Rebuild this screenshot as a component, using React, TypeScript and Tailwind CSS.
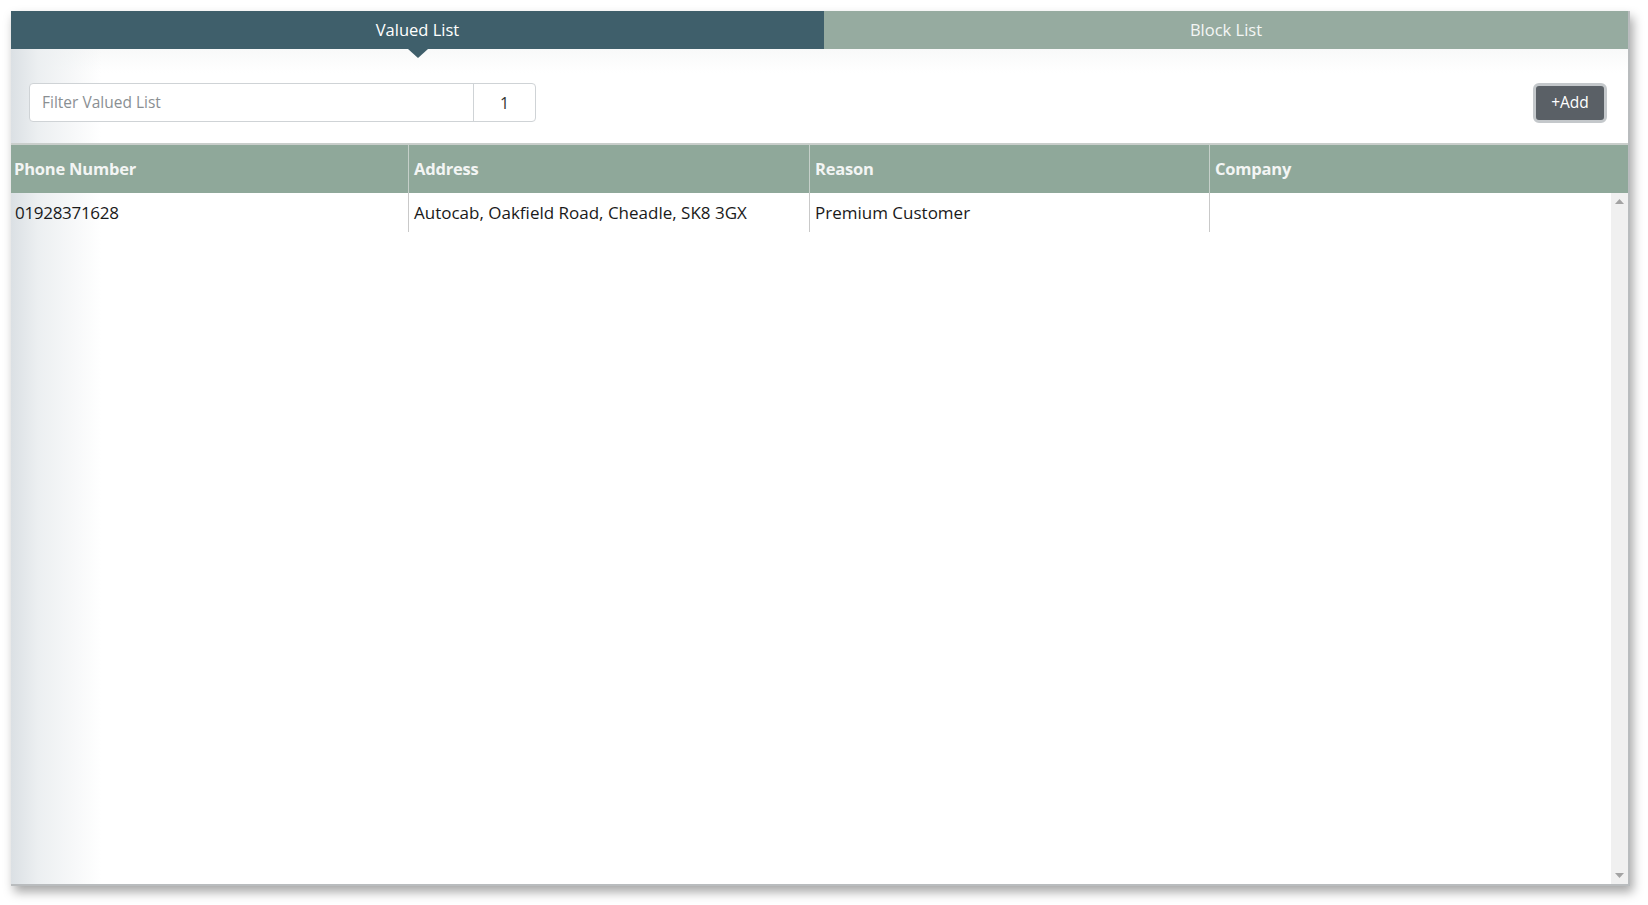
import React from 'react';

const rows = [
  { phone: '01928371628', address: 'Autocab, Oakfield Road, Cheadle, SK8 3GX', reason: 'Premium Customer', company: '' },
];

const App: React.FC = () => {
  return (
    <div className="w-[1648px] h-[905px] bg-white pt-[11px] pl-[11px] font-['Open_Sans',sans-serif]">
      {/* Panel */}
      <div className="relative w-[1619px] h-[875px] flex flex-col bg-white border-r-2 border-b-2 border-[#b9bcbe] shadow-[3px_6px_10px_rgba(0,0,0,0.35)] overflow-hidden">
        {/* left fade */}
        <div className="absolute left-0 top-[38px] bottom-0 w-[90px] bg-[linear-gradient(to_right,#dbe0e4,#eceff1_30%,rgba(255,255,255,0))] pointer-events-none" />

        {/* Tabs */}
        <div className="flex h-[38px] shrink-0 text-[16.5px]">
          <div className="relative w-[813px] bg-[#3f5f6b] text-white flex items-center justify-center">
            Valued List
            <div className="absolute left-1/2 -translate-x-1/2 top-full w-0 h-0 border-l-[10px] border-r-[10px] border-t-[9px] border-l-transparent border-r-transparent border-t-[#3f5f6b]" />
          </div>
          <div className="flex-1 bg-[#96aba0] text-[#f4f6f5] flex items-center justify-center">Block List</div>
        </div>

        {/* Toolbar */}
        <div className="flex items-start justify-between h-[94px] pt-[34px] pl-[18px] pr-[21px] bg-[linear-gradient(to_bottom,#f8f9f9,rgba(255,255,255,0)_24px)]">
          <div className="relative flex h-[39px] w-[507px] rounded-[4px] border border-[#cfd3d6] bg-white">
            <div className="flex-1 flex items-center pl-[12px] text-[15.5px] text-[#8a8f93]">Filter Valued List</div>
            <div className="w-[62px] border-l border-[#cfd3d6] flex items-center justify-center text-[16px] text-[#333]">1</div>
          </div>
          <button className="h-[40px] w-[74px] rounded-[6px] border-[3px] border-[#c4c8cb] bg-[#5a6066] text-white text-[15.5px] flex items-center justify-center">
            +Add
          </button>
        </div>

        {/* Table header */}
        <div className="relative grid grid-cols-[398px_401px_400px_1fr] h-[50px] shrink-0 bg-[#8fa89a] border-t-2 border-[#c9cecb] text-[#f3f5f4] text-[16.5px] font-bold tracking-[-0.2px]">
          <div className="flex items-center pl-[3px] border-r border-[#c5cfc9]">Phone Number</div>
          <div className="flex items-center pl-[5px] border-r border-[#c5cfc9]">Address</div>
          <div className="flex items-center pl-[5px] border-r border-[#c5cfc9]">Reason</div>
          <div className="flex items-center pl-[5px]">Company</div>
        </div>

        {/* Body */}
        <div className="relative flex flex-1 min-h-0">
          <div className="flex-1">
            {rows.map((r) => (
              <div key={r.phone} className="grid grid-cols-[398px_401px_400px_1fr] h-[39px] text-[17px] text-[#1a1a1a]">
                <div className="flex items-center pl-[4px] border-r border-[#c9c9c9] tracking-[-0.3px]">{r.phone}</div>
                <div className="flex items-center pl-[5px] border-r border-[#c9c9c9]">{r.address}</div>
                <div className="flex items-center pl-[5px] border-r border-[#c9c9c9]">{r.reason}</div>
                <div className="flex items-center pl-[5px]">{r.company}</div>
              </div>
            ))}
          </div>
          {/* scrollbar */}
          <div className="w-[17px] bg-[#f0f0f0] flex flex-col justify-between items-center py-[6px]">
            <svg width="9" height="5" viewBox="0 0 9 5"><path d="M0 5 L4.5 0 L9 5 Z" fill="#a3a3a3" /></svg>
            <svg width="9" height="5" viewBox="0 0 9 5"><path d="M0 0 L4.5 5 L9 0 Z" fill="#a3a3a3" /></svg>
          </div>
        </div>
      </div>
    </div>
  );
};

export default App;
